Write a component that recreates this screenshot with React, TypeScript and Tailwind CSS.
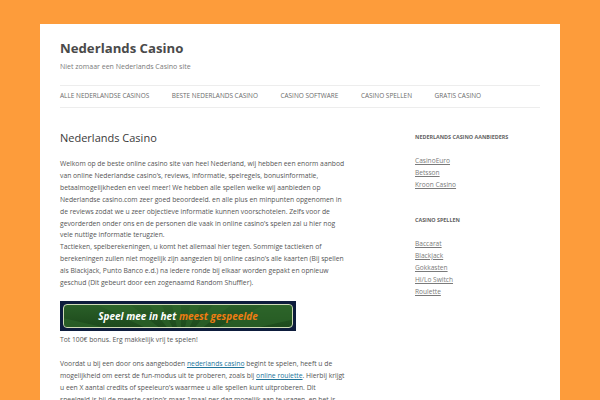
import React from "react";

const navItems = [
  "ALLE NEDERLANDSE CASINOS",
  "BESTE NEDERLANDS CASINO",
  "CASINO SOFTWARE",
  "CASINO SPELLEN",
  "GRATIS CASINO",
];

const widgets = [
  { title: "NEDERLANDS CASINO AANBIEDERS", links: ["CasinoEuro", "Betsson", "Kroon Casino"] },
  { title: "CASINO SPELLEN", links: ["Baccarat", "Blackjack", "Gokkasten", "Hi/Lo Switch", "Roulette"] },
];

function Banner() {
  const rays = [];
  for (let i = 0; i < 14; i++) {
    const a1 = (i * 2 * Math.PI) / 14 - Math.PI;
    const a2 = a1 + Math.PI / 14;
    const r = 200;
    rays.push(
      <polygon
        key={i}
        points={`117,40 ${117 + r * Math.cos(a1)},${40 + r * Math.sin(a1)} ${117 + r * Math.cos(a2)},${40 + r * Math.sin(a2)}`}
        fill="#2f6a2c"
        opacity="0.55"
      />
    );
  }
  return (
    <div className="w-[236px] h-[30px] bg-[#0d1c3c] p-[3px] mb-[3px]">
      <div className="relative h-full w-full rounded-[4px] border border-[#cfdcb6] bg-[linear-gradient(#2a5f28,#1d4a1c)] overflow-hidden flex items-center justify-center">
        <svg className="absolute inset-0" width="230" height="24" viewBox="0 0 230 24" preserveAspectRatio="none">
          {rays}
        </svg>
        <span className="relative font-['Open_Sans',sans-serif] font-bold italic text-[10px] leading-none text-white">
          Speel mee in het <span className="text-[#ee7d12]">meest gespeelde</span>
        </span>
      </div>
    </div>
  );
}

export default function App() {
  return (
    <div className="min-h-[400px] bg-[#fd9c3b] pt-[24px] px-[40px] font-['Open_Sans',sans-serif]">
      <div className="bg-white h-[376px] overflow-hidden px-[20px]">
        <header className="pt-[18px]">
          <h1 className="text-[13.2px] leading-[13px] font-bold text-[#4a4a4a]">Nederlands Casino</h1>
          <p className="text-[7px] leading-[10px] text-[#7a7a7a] mt-[7px]">Niet zomaar een Nederlands Casino site</p>
        </header>
        <nav className="mt-[13px] border-t border-b border-[#ededed] h-[23px] flex items-center gap-[22.5px]">
          {navItems.map((n) => (
            <span key={n} className="text-[6.45px] text-[#6a6a6a] leading-none whitespace-nowrap">
              {n}
            </span>
          ))}
        </nav>
        <div className="flex pt-[24px]">
          <main className="w-[315px] shrink-0 text-[6.78px] leading-[11.9px] text-[#555]">
            <h2 className="text-[11px] leading-[12px] text-[#3a3a3a] mb-[14px]">Nederlands Casino</h2>
            <p className="mb-[12px] whitespace-nowrap">
              Welkom op de beste online casino site van heel Nederland, wij hebben een enorm aanbod<br />
              van online Nederlandse casino’s, reviews, informatie, spelregels, bonusinformatie,<br />
              betaalmogelijkheden en veel meer! We hebben alle spellen welke wij aanbieden op<br />
              Nederlandse casino.com zeer goed beoordeeld. en alle plus en minpunten opgenomen in<br />
              de reviews zodat we u zeer objectieve informatie kunnen voorschotelen. Zelfs voor de<br />
              gevorderden onder ons en de personen die vaak in online casino’s spelen zal u hier nog<br />
              vele nuttige informatie terugzien.<br />
              Tactieken, spelberekeningen, u komt het allemaal hier tegen. Sommige tactieken of<br />
              berekeningen zullen niet mogelijk zijn aangezien bij online casino’s alle kaarten (Bij spellen<br />
              als Blackjack, Punto Banco e.d.) na iedere ronde bij elkaar worden gepakt en opnieuw<br />
              geschud (Dit gebeurt door een zogenaamd Random Shuffler).
            </p>
            <div className="mb-[12px]">
              <Banner />
              <p>Tot 100€ bonus. Erg makkelijk vrij te spelen!</p>
            </div>
            <p className="whitespace-nowrap">
              Voordat u bij een door ons aangeboden{" "}
              <a className="text-[#21759b] underline">nederlands casino</a> begint te spelen, heeft u de<br />
              mogelijkheid om eerst de fun-modus uit te proberen, zoals bij{" "}
              <a className="text-[#21759b] underline">online roulette</a>. Hierbij krijgt<br />
              u een X aantal credits of speeleuro’s waarmee u alle spellen kunt uitproberen. Dit<br />
              speelgeld is bij de meeste casino’s maar 1maal per dag mogelijk aan te vragen, en het is
            </p>
          </main>
          <aside className="ml-[40px] flex flex-col gap-[24px]">
            {widgets.map((w) => (
              <div key={w.title}>
                <h3 className="text-[5.4px] font-bold text-[#636363] leading-[11px] mb-[12px] whitespace-nowrap">
                  {w.title}
                </h3>
                <ul className="text-[6.6px] leading-[12px] text-[#7a7a7a]">
                  {w.links.map((l) => (
                    <li key={l}>
                      <a className="underline">{l}</a>
                    </li>
                  ))}
                </ul>
              </div>
            ))}
          </aside>
        </div>
      </div>
    </div>
  );
}
